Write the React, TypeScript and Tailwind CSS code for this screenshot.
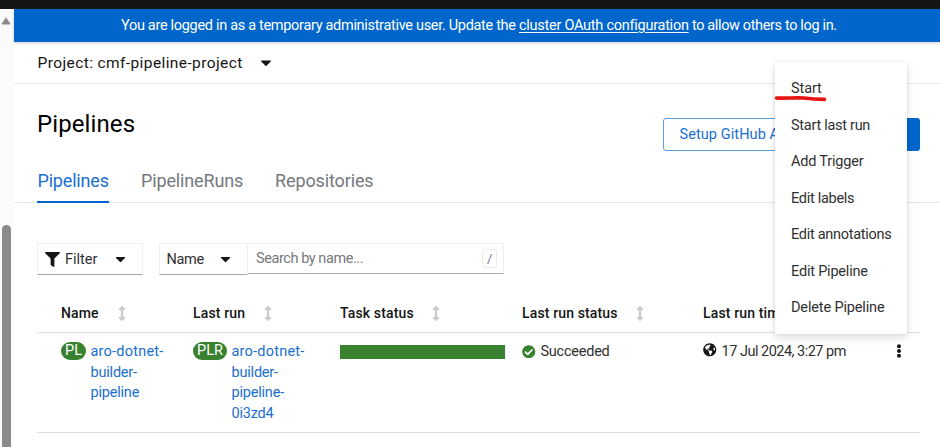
import type { ReactNode } from "react";
import { FaArrowsAltV, FaCaretDown, FaCheckCircle, FaEllipsisV, FaFilter, FaGlobeAmericas } from "react-icons/fa";

const menuItems = [
  { label: "Start", tracking: "tracking-[-0.1px]" },
  { label: "Start last run", tracking: "tracking-[-0.28px]" },
  { label: "Add Trigger", tracking: "tracking-[-0.2px]" },
  { label: "Edit labels", tracking: "tracking-[-0.28px]" },
  { label: "Edit annotations", tracking: "tracking-[-0.28px]" },
  { label: "Edit Pipeline", tracking: "tracking-[-0.2px]" },
  { label: "Delete Pipeline", tracking: "tracking-[-0.15px]" },
];

function HeaderCell({ children, sort = true, gap = "gap-[18px]" }: { children: ReactNode; sort?: boolean; gap?: string }) {
  return (
    <div className={`flex items-center whitespace-nowrap text-[14px] font-medium tracking-[0.14px] text-[#151515] ${gap}`}>
      <span>{children}</span>
      {sort && <FaArrowsAltV className="h-[15px] w-[8px] text-[#cbcbcb]" />}
    </div>
  );
}

function ResourceLink({ badge, badgeWidth, lines }: { badge: string; badgeWidth: string; lines: string[] }) {
  return (
    <div className="flex items-start gap-[4.5px]">
      <span className={`flex h-[18px] items-center justify-center rounded-full bg-[#38812f] text-[14.5px] leading-none text-white ${badgeWidth}`}>
        {badge}
      </span>
      <a className="text-[14.5px] leading-[20.7px] tracking-[-0.2px] text-[#1a6fd0]">
        {lines.map((line, i) => (
          <span key={line} className={i === 0 ? "block tracking-[0.22px]" : "block"}>{line}</span>
        ))}
      </a>
    </div>
  );
}

function ActionMenu() {
  return (
    <ul className="absolute left-[775px] top-[62px] z-10 h-[272px] w-[132px] bg-white pt-[9px] text-[14.5px] text-[#303030] shadow-[0_4px_8px_rgba(3,3,3,0.12),0_0_4px_rgba(3,3,3,0.07)]">
      {menuItems.map((item) => (
        <li key={item.label} className={`flex h-[36.5px] items-center whitespace-nowrap pl-4 ${item.tracking}`}>
          {item.label}
        </li>
      ))}
    </ul>
  );
}

export default function App() {
  return (
    <div className="relative flex h-[447px] w-[940px] flex-col overflow-hidden bg-white font-['Roboto',sans-serif] text-[#151515]">
      <div className="h-[9px] shrink-0 bg-[#151515]" />
      <div className="flex min-h-0 flex-1">
        <aside className="flex w-[14px] shrink-0 flex-col bg-[#fbfbfb]">
          <svg viewBox="0 0 10 8" className="ml-[1px] mt-[8px] h-[8px] w-[10px]">
            <path d="M5 1 L9 7 H1 Z" fill="#8a8a8a" stroke="#8a8a8a" strokeWidth="1" strokeLinejoin="round" />
          </svg>
          <div className="ml-[2px] mt-[200px] w-[9px] flex-1 rounded-t-full bg-[#8b8b8b]" />
        </aside>

        <main className="flex min-w-0 flex-1 flex-col">
          <div className="flex h-[33px] shrink-0 items-center whitespace-pre bg-[#0066cc] pl-[107px] pt-px text-[14.5px] text-white shadow-[0_1px_3px_rgba(0,0,0,0.2)]">
            <span className="tracking-[-0.31px]">You are logged in as a temporary administrative user. Update the </span>
            <a className="tracking-[-0.26px] underline underline-offset-2">cluster OAuth configuration</a>
            <span className="tracking-[-0.36px]"> to allow others to log in.</span>
          </div>

          <div className="flex h-[42px] shrink-0 items-center gap-[17px] border-b border-[#e6e6e6] pl-[23.5px] text-[15.5px] tracking-[0.4px]">
            <span className="pt-[2px]">Project: cmf-pipeline-project</span>
            <FaCaretDown className="-mt-px h-[17px] w-[12px]" />
          </div>

          <div className="flex h-[74px] shrink-0 items-start justify-between pl-[23px] pr-[20px]">
            <h1 className="mt-[25px] text-[24px] font-normal leading-[30px] tracking-[0.1px] text-black">Pipelines</h1>
            <div className="mt-[34px] flex w-[257px] gap-[15px] text-[14.5px]">
              <div className="flex h-[33px] w-[140px] items-center whitespace-nowrap rounded-[3px] border border-[#5b9fe0] pl-[15.5px] pt-px tracking-[0.08px] text-[#1a6fd0]">
                Setup GitHub App
              </div>
              <div className="h-[33px] flex-1 rounded-[3px] bg-[#0066cc]" />
            </div>
          </div>

          <nav className="flex h-[45px] shrink-0 gap-[32px] border-b border-[#e6e6e6] pl-[23px] text-[18px] text-[#75797d]">
            <div className="-mb-px h-[45px] w-[72px] border-b-2 border-[#0066cc] pl-[0.5px] pt-[9px] leading-[27px] tracking-[-0.18px] text-[#1a6fd0]">Pipelines</div>
            <div className="w-[102px] pt-[9px] leading-[27px] tracking-[-0.14px]">PipelineRuns</div>
            <div className="pt-[9px] leading-[27px] tracking-[-0.12px]">Repositories</div>
          </nav>

          <div className="ml-[23px] mt-[40px] flex h-[32px] shrink-0 text-[14.5px] text-[#303030]">
            <div className="flex w-[106px] items-center border border-[#efefef] border-b-[#a8a8a8] pl-[7px]">
              <FaFilter className="h-[15px] w-[15px] text-[#151515]" />
              <span className="ml-[5px] w-[50px] pt-px">Filter</span>
              <FaCaretDown className="h-[16px] w-[11px] text-[#151515]" />
            </div>
            <div className="ml-[16px] flex w-[89px] items-center border border-[#efefef] border-b-[#a8a8a8] pl-[6.5px]">
              <span className="w-[53px] pt-px tracking-[-0.35px]">Name</span>
              <FaCaretDown className="h-[16px] w-[11px] text-[#151515]" />
            </div>
            <div className="flex h-[31px] w-[256px] items-center justify-between border border-l-0 border-[#efefef] border-b-[#a8a8a8] pl-[8px] pr-[6px] tracking-[-0.43px] text-[#75797d]">
              <span>Search by name...</span>
              <kbd className="flex h-[19px] w-[15px] items-center justify-center rounded-[3px] border border-[#ececec] font-['Roboto',sans-serif] text-[13px]">/</kbd>
            </div>
          </div>

          <section className="ml-[23px] mr-[20px]">
            <div className="grid h-[58px] grid-cols-[132px_147px_182px_181px_1fr] items-end border-b border-[#e0e0e0] pb-[8px] pl-[24px]">
              <HeaderCell gap="gap-[19px]">Name</HeaderCell>
              <HeaderCell gap="gap-[19px]">Last run</HeaderCell>
              <HeaderCell>Task status</HeaderCell>
              <HeaderCell>Last run status</HeaderCell>
              <HeaderCell sort={false}>Last run time</HeaderCell>
            </div>
            <div className="grid h-[100px] grid-cols-[132px_147px_182px_181px_1fr_32px] items-start border-b border-[#e0e0e0] pl-[24px] pt-[9px] text-[14.5px] leading-[20.7px] text-[#303030]">
              <ResourceLink badge="PL" badgeWidth="w-[25px]" lines={["aro-dotnet-", "builder-", "pipeline"]} />
              <ResourceLink badge="PLR" badgeWidth="w-[34px]" lines={["aro-dotnet-", "builder-", "pipeline-", "0i3zd4"]} />
              <div className="mt-[3px] -ml-[0.5px] h-[14px] w-[165.5px] bg-[#38812f]" />
              <div className="flex items-center gap-[5px] tracking-[-0.24px]">
                <FaCheckCircle className="-mt-[2px] h-[13.5px] w-[13.5px] text-[#38812f]" />
                <span>Succeeded</span>
              </div>
              <div className="flex items-center gap-[5px] whitespace-nowrap tracking-[-0.5px]">
                <FaGlobeAmericas className="-mt-[5px] h-[13.5px] w-[13.5px] text-[#151515]" />
                <span>17 Jul 2024, 3:27 pm</span>
              </div>
              <FaEllipsisV className="ml-[4px] mt-[2px] h-[14px] w-[14px] text-[#151515]" />
            </div>
          </section>
        </main>
      </div>

      <ActionMenu />
      {/* Hand-drawn mark under the first menu action */}
      <svg viewBox="0 0 56 8" className="absolute left-[773px] top-[94px] z-20 h-[8px] w-[56px]">
        <path d="M3.5 4 C14 4.4 22 3.4 31 4 C38 5 44 5.4 51.5 5.4" fill="none" stroke="#e81313" strokeWidth="3.6" strokeLinecap="round" />
      </svg>
    </div>
  );
}
